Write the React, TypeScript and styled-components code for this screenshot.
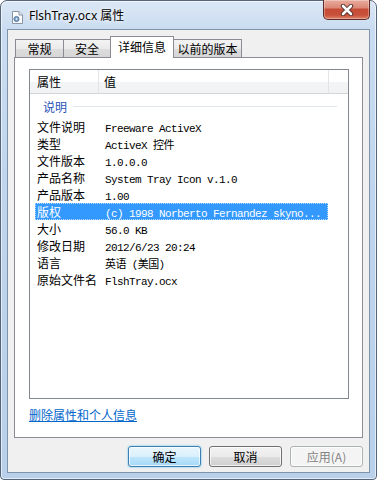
import React from "react";
import styled, { createGlobalStyle } from "styled-components";

const GlobalStyle = createGlobalStyle`
  html, body {
    margin: 0;
    padding: 0;
    background: #ffffff;
  }
  body {
    font-family: "Noto Sans CJK SC", "Noto Sans", sans-serif;
  }
`;

const Window = styled.div`
  box-sizing: border-box;
  width: 377px;
  height: 480px;
  display: flex;
  flex-direction: column;
  padding: 0 6px 6px 6px;
  border: 1px solid #55657a;
  border-radius: 7px 7px 4px 4px;
  background: linear-gradient(
    to bottom,
    #dbe7f5 0px,
    #cadcf1 28px,
    #bfd5ed 200px,
    #b8d0ea 100%
  );
  box-shadow: inset 0 0 0 1px rgba(255, 255, 255, 0.6);
`;

const TitleBar = styled.div`
  height: 28px;
  display: flex;
  align-items: flex-start;
  flex: none;
`;

const AppIcon = styled.svg`
  flex: none;
  margin: 10px 0 0 5px;
`;

const Title = styled.div`
  flex: 1;
  margin: 7px 0 0 6px;
  font-family: "Noto Sans", "Noto Sans CJK SC", sans-serif;
  font-size: 12px;
  line-height: 16px;
  color: #000;
  text-shadow: 0 0 6px #ffffff, 0 0 3px #ffffff;
`;

const CloseButton = styled.div`
  box-sizing: border-box;
  width: 47px;
  height: 20px;
  margin-top: -1px;
  border: 1px solid #5e2b25;
  border-top: none;
  border-radius: 0 0 5px 5px;
  background: linear-gradient(
    to bottom,
    #e9ab9d 0%,
    #dc8a78 40%,
    #c54b37 50%,
    #c9523c 80%,
    #de8467 100%
  );
  box-shadow: inset 0 0 0 1px rgba(255, 255, 255, 0.3);
  display: flex;
  align-items: center;
  justify-content: center;
`;

const Client = styled.div`
  flex: 1;
  display: flex;
  flex-direction: column;
  border: 1px solid #7f93ab;
  background: #f0f0f0;
  padding: 6px 6px 0 6px;
`;

const TabRow = styled.div`
  display: flex;
  align-items: flex-end;
  height: 22px;
  padding-left: 1px;
  margin-bottom: -1px;
  position: relative;
  z-index: 1;
`;

const Tab = styled.div<{ $w: number; $active?: boolean }>`
  box-sizing: border-box;
  width: ${(p) => p.$w}px;
  height: ${(p) => (p.$active ? 22 : 19)}px;
  margin-right: -1px;
  border: 1px solid #898c95;
  border-bottom: ${(p) => (p.$active ? "none" : "1px solid #898c95")};
  background: ${(p) =>
    p.$active
      ? "#ffffff"
      : "linear-gradient(to bottom, #f3f3f3 0%, #ebebeb 50%, #dddddd 51%, #d6d6d6 100%)"};
  position: relative;
  z-index: ${(p) => (p.$active ? 2 : 1)};
  display: flex;
  align-items: center;
  justify-content: center;
  padding-bottom: ${(p) => (p.$active ? 2 : 0)}px;
  font-family: "Noto Sans CJK SC", sans-serif;
  font-size: 12px;
  line-height: 14px;
  color: #000;
`;

const Panel = styled.div`
  box-sizing: border-box;
  height: 381px;
  border: 1px solid #898c95;
  background: #ffffff;
  padding: 11px 13px 0 14px;
  display: flex;
  flex-direction: column;
`;

const List = styled.div`
  box-sizing: border-box;
  height: 330px;
  border: 1px solid #828790;
  background: #ffffff;
  display: flex;
  flex-direction: column;
`;

const Header = styled.div`
  display: flex;
  height: 23px;
  border-bottom: 1px solid #d5d5d5;
  background: linear-gradient(
    to bottom,
    #ffffff 0%,
    #ffffff 50%,
    #f4f5f7 51%,
    #f1f2f4 100%
  );
`;

const HeaderCell = styled.div<{ $w?: number; $pad: number }>`
  box-sizing: border-box;
  ${(p) => (p.$w ? `width: ${p.$w}px;` : "flex: 1;")}
  padding-left: ${(p) => p.$pad}px;
  border-right: 1px solid #e3e4e6;
  display: flex;
  align-items: center;
  font-family: "Noto Sans CJK SC", sans-serif;
  font-size: 12px;
  color: #000;
  &:last-child {
    border-right: none;
  }
`;

const Group = styled.div`
  height: 24px;
  display: flex;
  align-items: center;
  padding-left: 13px;
  padding-right: 11px;
  gap: 6px;
`;

const GroupLabel = styled.span`
  font-family: "Noto Sans CJK SC", sans-serif;
  font-size: 12px;
  color: #2852b8;
`;

const GroupLine = styled.div`
  flex: 1;
  height: 1px;
  background: #e0e6ee;
`;

const Row = styled.div<{ $selected?: boolean }>`
  box-sizing: border-box;
  width: 293px;
  height: 17px;
  margin-left: 5px;
  padding-left: 2px;
  display: flex;
  align-items: baseline;
  overflow: hidden;
  background: ${(p) => (p.$selected ? "#3399ff" : "transparent")};
  color: ${(p) => (p.$selected ? "#ffffff" : "#000000")};
  outline: ${(p) => (p.$selected ? "1px dotted #b8dcff" : "none")};
  outline-offset: -1px;
`;

const NameCell = styled.div`
  width: 68px;
  flex: none;
  white-space: nowrap;
  font-family: "Noto Sans CJK SC", sans-serif;
  font-size: 12px;
  line-height: 17px;
`;

const ValueCell = styled.div`
  flex: 1;
  white-space: nowrap;
  font-family: "Liberation Mono", "Noto Sans CJK SC", monospace;
  font-size: 11px;
  letter-spacing: -0.6px;
  line-height: 17px;
`;

const Link = styled.a`
  margin-top: 8px;
  align-self: flex-start;
  font-family: "Noto Sans CJK SC", sans-serif;
  font-size: 12px;
  line-height: 16px;
  color: #0066cc;
  text-decoration: underline;
  cursor: pointer;
`;

const ButtonRow = styled.div`
  display: flex;
  justify-content: flex-end;
  gap: 8px;
  margin-top: 8px;
`;

const Button = styled.button<{ $variant?: "default" | "disabled" }>`
  box-sizing: border-box;
  width: 73px;
  height: 21px;
  padding: 0;
  border-radius: 3px;
  font-family: "Noto Sans CJK SC", sans-serif;
  font-size: 12px;
  line-height: 14px;
  border: 1px solid
    ${(p) =>
      p.$variant === "default"
        ? "#3c7fb1"
        : p.$variant === "disabled"
        ? "#adb2b5"
        : "#707070"};
  color: ${(p) => (p.$variant === "disabled" ? "#838383" : "#000000")};
  background: ${(p) =>
    p.$variant === "default"
      ? "linear-gradient(to bottom, #eaf6fd 0%, #d9f0fc 50%, #bee6fd 51%, #a7d9f5 100%)"
      : p.$variant === "disabled"
      ? "#f4f4f4"
      : "linear-gradient(to bottom, #f2f2f2 0%, #ebebeb 50%, #dddddd 51%, #cfcfcf 100%)"};
  box-shadow: ${(p) =>
    p.$variant === "default"
      ? "inset 0 0 0 1px rgba(255,255,255,0.7), 0 0 2px #48b6f0"
      : "inset 0 0 0 1px rgba(255,255,255,0.7)"};
`;

const rows: { name: string; value: string; selected?: boolean }[] = [
  { name: "文件说明", value: "Freeware ActiveX" },
  { name: "类型", value: "ActiveX 控件" },
  { name: "文件版本", value: "1.0.0.0" },
  { name: "产品名称", value: "System Tray Icon v.1.0" },
  { name: "产品版本", value: "1.00" },
  { name: "版权", value: "(c) 1998 Norberto Fernandez skyno...", selected: true },
  { name: "大小", value: "56.0 KB" },
  { name: "修改日期", value: "2012/6/23 20:24" },
  { name: "语言", value: "英语 (美国)" },
  { name: "原始文件名", value: "FlshTray.ocx" },
];

const tabs = [
  { label: "常规", w: 49 },
  { label: "安全", w: 48 },
  { label: "详细信息", w: 64, active: true },
  { label: "以前的版本", w: 69 },
];

export default function App() {
  return (
    <>
      <GlobalStyle />
      <Window>
        <TitleBar>
          <AppIcon width="11" height="13" viewBox="0 0 11 13">
            <path d="M0.5 0.5 H7 L10.5 4 V12.5 H0.5 Z" fill="#fdfdfd" stroke="#8a96a6" />
            <path d="M7 0.5 V4 H10.5" fill="#e3e8ee" stroke="#8a96a6" />
            <circle cx="4.5" cy="8" r="2.6" fill="#7aa0c8" stroke="#4d6f96" strokeWidth="0.8" />
            <circle cx="4.5" cy="8" r="0.9" fill="#e9f1fa" />
          </AppIcon>
          <Title>FlshTray.ocx 属性</Title>
          <CloseButton>
            <svg width="16" height="12" viewBox="0 0 16 12">
              <path d="M4 2 L12 10 M12 2 L4 10" stroke="#4a2a26" strokeWidth="4.4" strokeLinecap="round" />
              <path d="M4 2 L12 10 M12 2 L4 10" stroke="#ffffff" strokeWidth="2.6" strokeLinecap="round" />
            </svg>
          </CloseButton>
        </TitleBar>
        <Client>
          <TabRow>
            {tabs.map((t) => (
              <Tab key={t.label} $w={t.w} $active={t.active}>
                {t.label}
              </Tab>
            ))}
          </TabRow>
          <Panel>
            <List>
              <Header>
                <HeaderCell $w={69} $pad={7}>属性</HeaderCell>
                <HeaderCell $w={230} $pad={5}>值</HeaderCell>
                <HeaderCell $pad={0} />
              </Header>
              <Group>
                <GroupLabel>说明</GroupLabel>
                <GroupLine />
              </Group>
              {rows.map((r) => (
                <Row key={r.name} $selected={r.selected}>
                  <NameCell>{r.name}</NameCell>
                  <ValueCell>{r.value}</ValueCell>
                </Row>
              ))}
            </List>
            <Link>删除属性和个人信息</Link>
          </Panel>
          <ButtonRow>
            <Button $variant="default">确定</Button>
            <Button>取消</Button>
            <Button $variant="disabled" disabled>
              应用(A)
            </Button>
          </ButtonRow>
        </Client>
      </Window>
    </>
  );
}
